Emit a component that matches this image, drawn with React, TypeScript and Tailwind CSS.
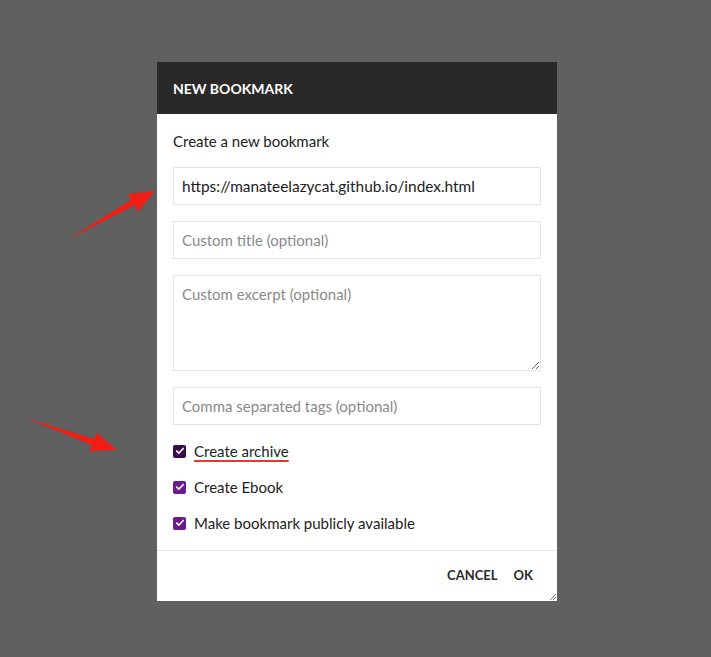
import { Check } from "lucide-react";

const font = { fontFamily: "Lato, 'Noto Sans', sans-serif" };

function Box({ dark }: { dark?: boolean }) {
	return (
		<span
			className={`flex size-[13px] shrink-0 items-center justify-center rounded-[2px] ${
				dark ? "bg-[#3c0b49]" : "bg-[#6c1a8c]"
			}`}
		>
			<Check className="size-[10px] text-white" strokeWidth={4} />
		</span>
	);
}

export default function App() {
	return (
		<div
			className="relative h-[657px] w-[711px] bg-[#606060] pl-[157px] pt-[62px] text-[15px] text-[#222]"
			style={font}
		>
			{/* Dialog */}
			<div className="relative w-[400px] bg-white">
				<div className="flex h-[52px] items-center bg-[#292929] px-4 text-[14px] font-bold text-white">
					NEW BOOKMARK
				</div>

				<div className="flex flex-col gap-4 px-4 pb-[17px] pt-[17px]">
					<p className="leading-5">Create a new bookmark</p>
					<input
						readOnly
						value="https://manateelazycat.github.io/index.html"
						className="h-[38px] border border-[#e5e5e5] px-2 text-[15.4px] text-[#222] outline-none"
						style={font}
					/>
					<input
						readOnly
						placeholder="Custom title (optional)"
						className="h-[38px] border border-[#e5e5e5] px-2 text-[15px] outline-none placeholder:text-[#8a8a8a]"
						style={font}
					/>
					<textarea
						readOnly
						placeholder="Custom excerpt (optional)"
						className="h-[96px] border border-[#e5e5e5] px-2 py-[7px] text-[15px] outline-none placeholder:text-[#8a8a8a]"
						style={font}
					/>
					<input
						readOnly
						placeholder="Comma separated tags (optional)"
						className="h-[38px] border border-[#e5e5e5] px-2 text-[15px] outline-none placeholder:text-[#8a8a8a]"
						style={font}
					/>
					<label className="flex h-5 items-center gap-2">
						<Box dark />
						<span className="underline decoration-[#e53935] decoration-[1.5px] underline-offset-[3px]">
							Create archive
						</span>
					</label>
					<label className="flex h-5 items-center gap-2">
						<Box />
						<span>Create Ebook</span>
					</label>
					<label className="flex h-5 items-center gap-2">
						<Box />
						<span>Make bookmark publicly available</span>
					</label>
				</div>

				<div className="flex h-[51px] items-center justify-end border-t border-[#e5e5e5] pr-4 text-[13px] font-bold text-[#2a2a2a]">
					<button type="button" className="px-2 py-1">
						CANCEL
					</button>
					<button type="button" className="px-2 py-1">
						OK
					</button>
				</div>

				<svg
					className="absolute bottom-0 right-0"
					width="10"
					height="10"
					viewBox="0 0 10 10"
				>
					<path d="M9 3 L3 9 M9 6 L6 9" stroke="#777" strokeWidth="1" />
				</svg>
			</div>

			{/* annotation arrows */}
			<svg
				className="pointer-events-none absolute inset-0"
				width="711"
				height="657"
			>
				<path
					d="M69 239 L131 200 L128 194 L155 191 L138 212 L135 205 Z"
					fill="#f21d14"
				/>
				<path
					d="M26 418 L94 439 L97 433 L117 450 L89 451 L92 445 Z"
					fill="#f21d14"
				/>
			</svg>
		</div>
	);
}
